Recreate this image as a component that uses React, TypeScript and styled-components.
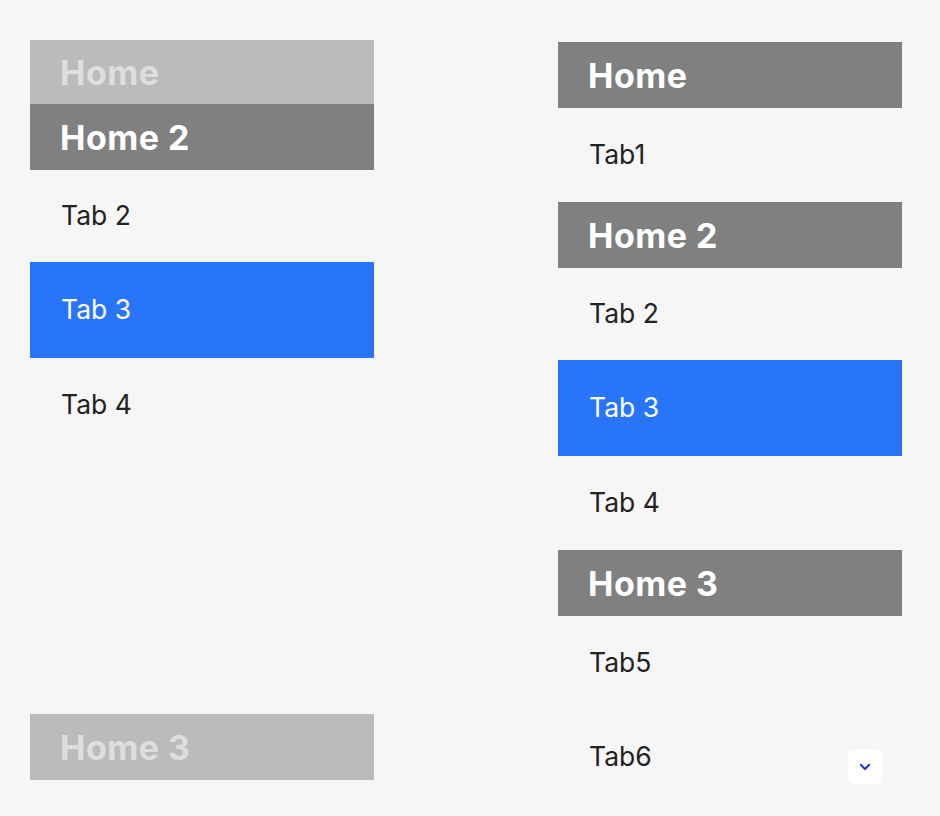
import React from "react";
import styled, { createGlobalStyle } from "styled-components";

const GlobalStyle = createGlobalStyle`
  html, body {
    margin: 0;
    padding: 0;
    background: #f6f6f6;
    font-family: Inter, "Noto Sans", "Liberation Sans", sans-serif;
    color: #222;
  }
  * { box-sizing: border-box; }
`;

const Page = styled.div`
  display: grid;
  grid-template-columns: 344px 344px;
  column-gap: 184px;
  padding: 40px 0 0 30px;
  height: 816px;
  overflow: hidden;
  position: relative;
`;

const StickyPanel = styled.div`
  display: flex;
  flex-direction: column;
  height: 740px;
`;

const ListPanel = styled.div`
  display: flex;
  flex-direction: column;
  margin-top: 2px;
`;

const Header = styled.div<{ $faded?: boolean; $short?: boolean }>`
  height: ${(p) => (p.$short ? "64px" : "66px")};
  display: flex;
  align-items: center;
  padding: 0 30px;
  font-size: 34px;
  font-weight: 700;
  letter-spacing: 0.5px;
  background: ${(p) => (p.$faded ? "#bbbbbb" : "#808080")};
  color: ${(p) => (p.$faded ? "#dedede" : "#ffffff")};
  flex-shrink: 0;
`;

const Tab = styled.div<{ $active?: boolean; $h?: number }>`
  height: ${(p) => p.$h ?? 94}px;
  display: flex;
  align-items: center;
  padding: 0 31px 3px;
  font-size: 26.5px;
  background: ${(p) => (p.$active ? "#2874fb" : "transparent")};
  color: ${(p) => (p.$active ? "#ffffff" : "#222222")};
  flex-shrink: 0;
`;

const Spacer = styled.div`
  flex: 1;
`;

const ScrollButton = styled.button`
  position: absolute;
  left: 848px;
  top: 750px;
  width: 34px;
  height: 34px;
  border: none;
  border-radius: 5px;
  background: #ffffff;
  display: flex;
  align-items: center;
  justify-content: center;
  padding: 0;
  cursor: pointer;
`;

const Chevron = () => (
  <svg width="12" height="8" viewBox="0 0 12 8" fill="none">
    <path
      d="M2 2L6 6L10 2"
      stroke="#2331d6"
      strokeWidth={2}
      strokeLinecap="square"
    />
  </svg>
);

export default function App() {
  return (
    <>
      <GlobalStyle />
      <Page>
        <StickyPanel>
          <Header $faded $short>Home</Header>
          <Header>Home 2</Header>
          <Tab $h={92}>Tab 2</Tab>
          <Tab $active $h={96}>Tab 3</Tab>
          <Tab>Tab 4</Tab>
          <Spacer />
          <Header $faded>Home 3</Header>
        </StickyPanel>
        <ListPanel>
          <Header>Home</Header>
          <Tab>Tab1</Tab>
          <Header>Home 2</Header>
          <Tab $h={92}>Tab 2</Tab>
          <Tab $active $h={96}>Tab 3</Tab>
          <Tab>Tab 4</Tab>
          <Header>Home 3</Header>
          <Tab>Tab5</Tab>
          <Tab>Tab6</Tab>
        </ListPanel>
        <ScrollButton aria-label="Scroll down">
          <Chevron />
        </ScrollButton>
      </Page>
    </>
  );
}
